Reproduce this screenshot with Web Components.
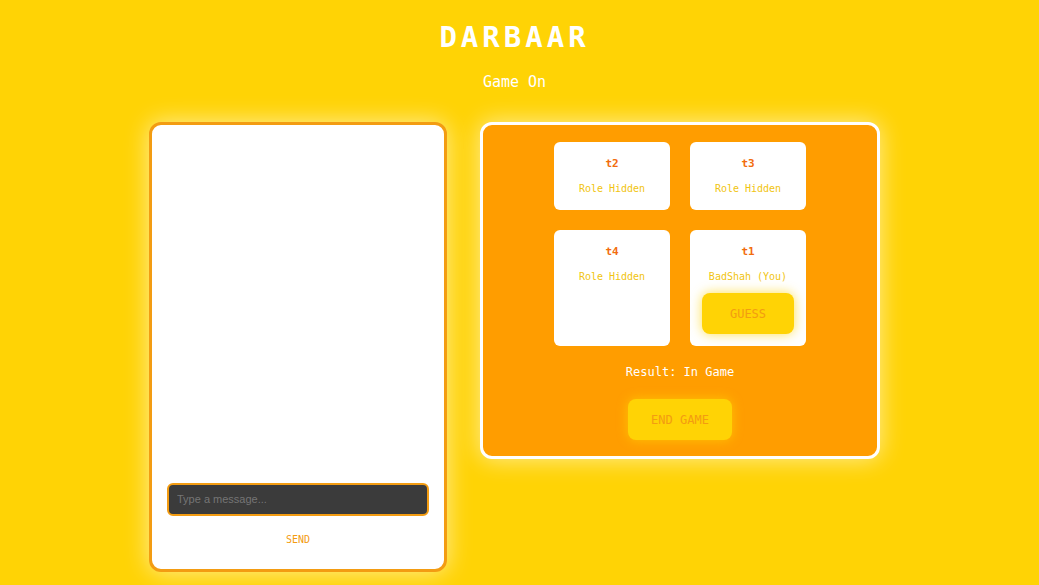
<!DOCTYPE html>
<html lang="en">
<head>
<meta charset="utf-8">
<meta name="viewport" content="width=device-width, initial-scale=1">
<title>Darbaar</title>
<style>
  :root {
    --yellow: #ffd305;
    --orange: #ff9d00;
    --amber: #f39c12;
    --mono: "DejaVu Sans Mono", monospace;
  }
  body { margin: 0; min-height: 100vh; background: var(--yellow); font-family: var(--mono); overflow: hidden auto; }
  html { scrollbar-width: none; }
</style>
</head>
<body>
<darbaar-app></darbaar-app>

<template id="app">
  <style>
    :host { display: block; padding: 20px 10px 12px 0; text-align: center; color: #fff; }
    h1 { margin: 0; font-size: 29px; line-height: 34px; letter-spacing: 4px; }
    h2 { margin: 16px 0 0; font-size: 15px; line-height: 24px; font-weight: 400; }
    main { display: flex; justify-content: center; align-items: flex-start; gap: 33px; margin-top: 28px; }
    chat-panel { flex: 0 1 298px; }
    game-board { flex: 0 1 400px; }
  </style>
  <header>
    <h1>DARBAAR</h1>
    <h2>Game On</h2>
  </header>
  <main>
    <chat-panel></chat-panel>
    <game-board>
      <player-card name="t2" role-name="Role Hidden"></player-card>
      <player-card name="t3" role-name="Role Hidden"></player-card>
      <player-card name="t4" role-name="Role Hidden"></player-card>
      <player-card name="t1" role-name="BadShah (You)"><glow-button>GUESS</glow-button></player-card>
    </game-board>
  </main>
</template>

<template id="chat">
  <style>
    :host { display: block; box-sizing: border-box; padding: 15px; background: #fff; border: 3px solid var(--amber); border-radius: 12px; box-shadow: 0 0 24px rgba(255,255,255,.6); }
    .log { min-height: 343px; }
    form { display: flex; flex-direction: column; gap: 8px; }
    input { box-sizing: border-box; width: 100%; height: 33px; padding: 0 8px 2px; border: 2px solid var(--amber); border-radius: 6px; background: #3b3b3b; color: #fff; font: 11px "Liberation Sans", Arial, sans-serif; }
    input::placeholder { color: #757575; }
    button { height: 30px; padding: 0; border: 0; background: none; color: var(--amber); font: 10px var(--mono); }
  </style>
  <div class="log" role="log"></div>
  <form>
    <input type="text" aria-label="Message" placeholder="Type a message...">
    <button type="button">SEND</button>
  </form>
</template>

<template id="board">
  <style>
    :host { display: block; box-sizing: border-box; padding: 17px 16px 16px; background: var(--orange); border: 3px solid #fff; border-radius: 12px; box-shadow: 0 0 24px rgba(255,255,255,.6); }
    .players { display: grid; grid-template-columns: repeat(2, 116px); justify-content: center; gap: 20px; }
    p { margin: 16px 0; font-size: 12px; line-height: 21px; }
  </style>
  <div class="players"><slot></slot></div>
  <p>Result: In Game</p>
  <glow-button>END GAME</glow-button>
</template>

<template id="card">
  <style>
    :host { display: block; box-sizing: border-box; min-height: 68px; padding: 14px 12px 12px; background: #fff; border-radius: 6px; color: #f1c40f; }
    h3 { margin: 0 0 9px; font-size: 11px; line-height: 16px; color: #f26c0d; }
    p { margin: 0; font-size: 10px; line-height: 16px; white-space: nowrap; }
    ::slotted(glow-button) { margin-top: 8px; }
  </style>
  <h3></h3>
  <p></p>
  <slot></slot>
</template>

<template id="button">
  <style>
    :host { display: block; }
    button { height: 41px; padding: 0 23px; border: 0; border-radius: 8px; background: var(--yellow); color: var(--amber); font: 12px var(--mono); box-shadow: 0 0 12px rgba(255,211,5,.7); white-space: nowrap; }
    :host([wide]) button { width: 100%; }
  </style>
  <button type="button"><slot></slot></button>
</template>

<script>
  class TemplateElement extends HTMLElement {
    constructor() {
      super();
      const root = this.attachShadow({ mode: "open" });
      root.append(document.getElementById(this.constructor.template).content.cloneNode(true));
    }
  }
  class GlowButton extends TemplateElement { static template = "button"; }
  class PlayerCard extends TemplateElement {
    static template = "card";
    connectedCallback() {
      this.shadowRoot.querySelector("h3").textContent = this.getAttribute("name");
      this.shadowRoot.querySelector("p").textContent = this.getAttribute("role-name");
      this.querySelector("glow-button")?.setAttribute("wide", "");
    }
  }
  class ChatPanel extends TemplateElement { static template = "chat"; }
  class GameBoard extends TemplateElement { static template = "board"; }
  class DarbaarApp extends TemplateElement { static template = "app"; }
  customElements.define("glow-button", GlowButton);
  customElements.define("player-card", PlayerCard);
  customElements.define("chat-panel", ChatPanel);
  customElements.define("game-board", GameBoard);
  customElements.define("darbaar-app", DarbaarApp);
</script>
</body>
</html>
